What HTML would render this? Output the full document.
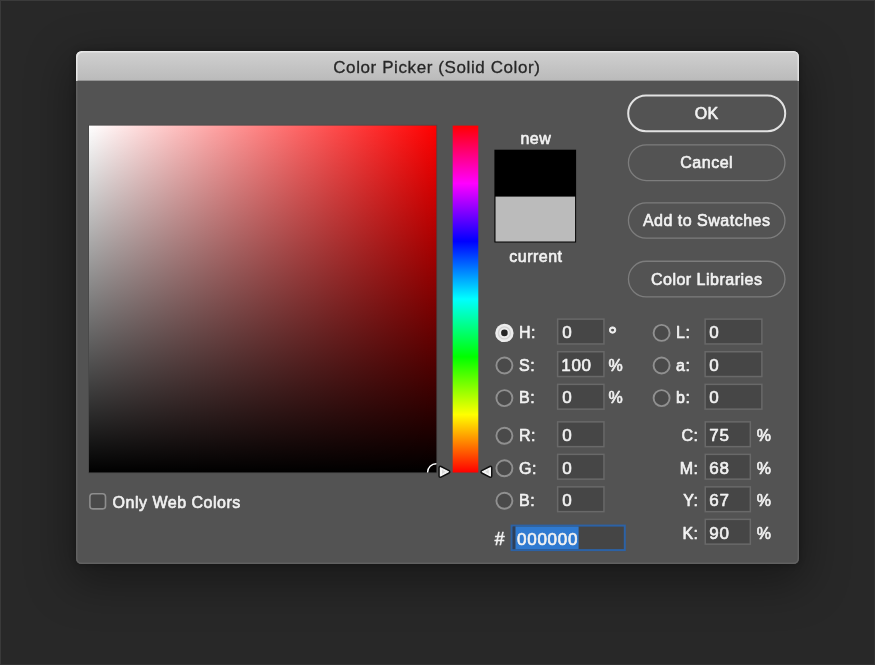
<!DOCTYPE html>
<html><head><meta charset="utf-8">
<title>Color Picker (Solid Color)</title>
<style>
html,body{margin:0;padding:0;}
body{width:875px;height:665px;background:#282828;position:relative;overflow:hidden;font-family:"Liberation Sans",sans-serif;font-size:16px;color:#f2f2f2;}
.abs{position:absolute;}
#dlg{position:absolute;left:76px;top:51px;width:723px;height:513px;background:#535353;border-radius:5.5px;box-shadow:0 14px 44px 6px rgba(0,0,0,.36),0 0 6px rgba(0,0,0,.3),inset 0 0 0 1.5px #616161;overflow:hidden;}
#title{position:absolute;left:0;top:0;width:723px;height:30px;border-radius:5.5px 5.5px 0 0;background:linear-gradient(#d0d0d0,#bababa);box-shadow:inset 1.5px 1.5px 0 #e6e6e6,inset -1.5px 0 0 #e0e0e0,inset 0 -1px 0 rgba(120,120,120,.55);}
svg{will-change:transform;}
svg text{font-family:"Liberation Sans",sans-serif;font-size:16px;fill:#f2f2f2;stroke:#f2f2f2;stroke-width:0.62px;stroke-linejoin:round;letter-spacing:.5px;}
svg text.d{font-size:17px;letter-spacing:.75px;}
svg text.ttl{font-size:17px;fill:#272727;stroke:#272727;stroke-width:.3px;letter-spacing:.6px;}
.box{fill:#464646;stroke:#696969;stroke-width:1.5;}
.btn{fill:none;stroke:#7d7d7d;stroke-width:1.3;}
.rad{fill:#4a4a4a;stroke:#909090;stroke-width:1.9;}
</style></head><body>
<div class="abs" style="left:0;top:0;width:875px;height:665px;box-sizing:border-box;border:1px solid;border-color:#3b3b3b #303030 #323232 #3a3a3a;"></div>
<div id="dlg"><div id="title"></div></div>


<svg class="abs" style="left:0;top:0;" width="875" height="665" viewBox="0 0 875 665">
<defs><clipPath id="fc"><rect x="89" y="125.6" width="347.4" height="346.8"/></clipPath><mask id="fm" maskUnits="userSpaceOnUse" x="80" y="120" width="370" height="360"><rect x="89" y="125.6" width="347.4" height="346.8" fill="#fff"/></mask><linearGradient id="gh" gradientUnits="userSpaceOnUse" x1="89" y1="0" x2="436.4" y2="0"><stop offset="0" stop-color="#fff"/><stop offset="1" stop-color="#f00"/></linearGradient><linearGradient id="gv" gradientUnits="userSpaceOnUse" x1="0" y1="125.6" x2="0" y2="472.4"><stop offset="0" stop-color="#000" stop-opacity="0"/><stop offset="1" stop-color="#000"/></linearGradient><linearGradient id="hue" x1="0" y1="0" x2="0" y2="1"><stop offset="0" stop-color="#f00"/><stop offset=".1667" stop-color="#f0f"/><stop offset=".3333" stop-color="#00f"/><stop offset=".5" stop-color="#0ff"/><stop offset=".6667" stop-color="#0f0"/><stop offset=".8333" stop-color="#ff0"/><stop offset="1" stop-color="#f00"/></linearGradient></defs>
<rect x="88.2" y="124.8" width="349" height="348.4" fill="#474747"/>
<g mask="url(#fm)"><rect x="86" y="122" width="354" height="354" fill="url(#gh)"/><rect x="86" y="122" width="354" height="354" fill="url(#gv)"/></g>
<rect x="452.7" y="125.6" width="25.6" height="346.9" fill="url(#hue)"/>
<rect x="494.4" y="149.7" width="81.7" height="92.8" fill="#000"/>
<rect x="495.5" y="196.6" width="79.6" height="44.9" fill="#bbbbbb"/>
<circle cx="436.2" cy="472.3" r="8.6" fill="none" stroke="#fff" stroke-width="1.4" clip-path="url(#fc)"/>
<path d="M440.4 467.7 L440.4 475.90000000000003 L448.4 471.8 Z" fill="#f4f4f4" stroke="#101010" stroke-width="4.2" stroke-linejoin="round"/><path d="M440.4 467.7 L440.4 475.90000000000003 L448.4 471.8 Z" fill="#f6f6f6" stroke="#f6f6f6" stroke-width="1.2" stroke-linejoin="round"/><path d="M442.0 469.6 L442.0 474.0 L445.6 471.8 Z" fill="#d9d9d9"/>
<path d="M490.4 467.7 L490.4 475.90000000000003 L482.4 471.8 Z" fill="#f4f4f4" stroke="#101010" stroke-width="4.2" stroke-linejoin="round"/><path d="M490.4 467.7 L490.4 475.90000000000003 L482.4 471.8 Z" fill="#f6f6f6" stroke="#f6f6f6" stroke-width="1.2" stroke-linejoin="round"/><path d="M488.79999999999995 469.6 L488.79999999999995 474.0 L485.19999999999993 471.8 Z" fill="#d9d9d9"/>
<rect x="628.20" y="95.60" width="157.00" height="35.60" rx="17.80" fill="none" stroke="#e2e2e2" stroke-width="2.0"/>
<rect x="628.45" y="144.85" width="156.50" height="35.70" rx="17.85" class="btn"/>
<rect x="628.45" y="202.85" width="156.50" height="35.30" rx="17.65" class="btn"/>
<rect x="628.45" y="261.25" width="156.50" height="35.70" rx="17.85" class="btn"/>
<text x="706.7" y="119" text-anchor="middle">OK</text>
<text x="706.7" y="168" text-anchor="middle">Cancel</text>
<text x="706.7" y="226" text-anchor="middle">Add to Swatches</text>
<text x="706.7" y="285" text-anchor="middle">Color Libraries</text>
<text class="ttl" x="436.9" y="73" text-anchor="middle">Color Picker (Solid Color)</text>
<text x="535.9" y="144" text-anchor="middle">new</text>
<text x="535.9" y="262" text-anchor="middle">current</text>
<circle cx="504.4" cy="332.9" r="9.2" fill="#ededed"/><circle cx="504.4" cy="332.9" r="6" fill="none" stroke="#d4d4d4" stroke-width="1.4"/><circle cx="504.4" cy="332.9" r="3.3" fill="#262626"/>
<circle class="rad" cx="661.6" cy="332.9" r="8"/>
<rect class="box" x="557.65" y="319.15" width="46.30" height="24.80"/>
<rect class="box" x="705.15" y="319.15" width="56.70" height="24.80"/>
<text x="519" y="338">H:</text>
<text x="676.1" y="338">L:</text>
<text class="d" x="562.2" y="338">0</text>
<text class="d" x="709.2" y="338">0</text>
<text x="607.9" y="343" style="font-size:23px;stroke-width:.8px">°</text>
<circle class="rad" cx="504.4" cy="365.5" r="8"/>
<circle class="rad" cx="661.6" cy="365.5" r="8"/>
<rect class="box" x="557.65" y="351.75" width="46.30" height="24.80"/>
<rect class="box" x="705.15" y="351.75" width="56.70" height="24.80"/>
<text x="519" y="371">S:</text>
<text x="676.1" y="371">a:</text>
<text class="d" x="561.2" y="371">100</text>
<text class="d" x="709.2" y="371">0</text>
<text x="608.6" y="371">%</text>
<circle class="rad" cx="504.4" cy="398.1" r="8"/>
<circle class="rad" cx="661.6" cy="398.1" r="8"/>
<rect class="box" x="557.65" y="384.35" width="46.30" height="24.80"/>
<rect class="box" x="705.15" y="384.35" width="56.70" height="24.80"/>
<text x="519" y="403">B:</text>
<text x="676.1" y="403">b:</text>
<text class="d" x="562.2" y="403">0</text>
<text class="d" x="709.2" y="403">0</text>
<text x="608.6" y="403">%</text>
<circle class="rad" cx="504.4" cy="435.8" r="8"/>
<rect class="box" x="557.65" y="421.85" width="46.30" height="24.80"/>
<text x="519" y="441">R:</text>
<text class="d" x="562.2" y="441">0</text>
<rect class="box" x="705.25" y="421.85" width="45.10" height="24.80"/>
<text x="698.5" y="441" text-anchor="end">C:</text>
<text class="d" x="709.2" y="441">75</text>
<text x="756.8" y="441">%</text>
<circle class="rad" cx="504.4" cy="468.3" r="8"/>
<rect class="box" x="557.65" y="454.35" width="46.30" height="24.80"/>
<text x="519" y="474">G:</text>
<text class="d" x="562.2" y="474">0</text>
<rect class="box" x="705.25" y="454.35" width="45.10" height="24.80"/>
<text x="698.5" y="474" text-anchor="end">M:</text>
<text class="d" x="709.2" y="474">68</text>
<text x="756.8" y="474">%</text>
<circle class="rad" cx="504.4" cy="500.8" r="8"/>
<rect class="box" x="557.65" y="486.85" width="46.30" height="24.80"/>
<text x="519" y="506">B:</text>
<text class="d" x="562.2" y="506">0</text>
<rect class="box" x="705.25" y="486.85" width="45.10" height="24.80"/>
<text x="698.5" y="506" text-anchor="end">Y:</text>
<text class="d" x="709.2" y="506">67</text>
<text x="756.8" y="506">%</text>
<rect class="box" x="705.25" y="519.35" width="45.10" height="24.80"/>
<text x="698.5" y="539" text-anchor="end">K:</text>
<text class="d" x="709.2" y="539">90</text>
<text x="756.8" y="539">%</text>
<rect x="511.6" y="525.6" width="113.2" height="24.5" fill="#454545" stroke="#2c62a6" stroke-width="2"/>
<rect x="512.8" y="526.6" width="2.6" height="22.5" fill="#2e3f5a"/>
<rect x="515.5" y="526.6" width="63.1" height="22.5" fill="#2f7ad1"/>
<text x="494.8" y="545" style="font-size:17.5px">#</text>
<text class="d" x="517" y="545">000000</text>
<rect x="89.9" y="493.7" width="15.6" height="15.2" rx="3" fill="#494949" stroke="#8e8e8e" stroke-width="1.6"/>
<text x="112.6" y="508">Only Web Colors</text>
</svg>
</body></html>
